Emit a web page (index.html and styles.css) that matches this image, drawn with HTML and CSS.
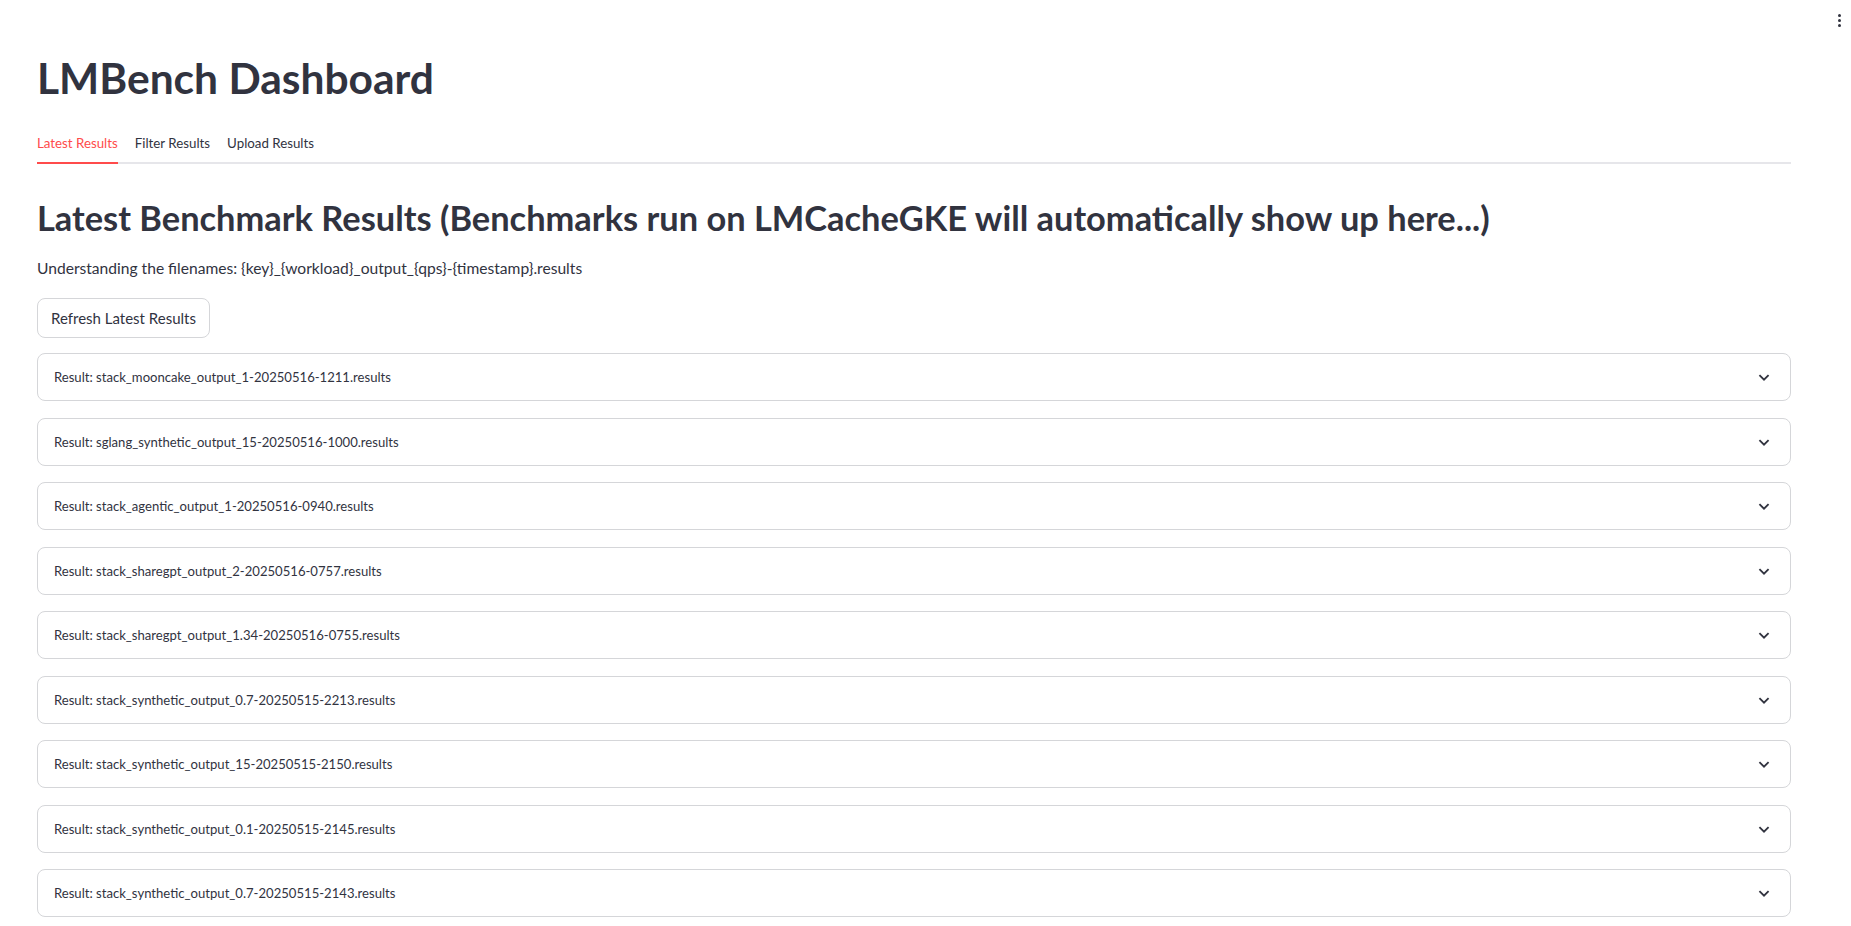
FILE: index.html
```html
<!DOCTYPE html>
<html lang="en">
<head>
<meta charset="utf-8">
<title>LMBench Dashboard</title>
<link rel="stylesheet" href="styles.css">
</head>
<body>
<div class="menu" aria-label="Main menu"><span></span><span></span><span></span></div>
<main class="page">
  <h1 class="title">LMBench Dashboard</h1>
  <nav class="tabs">
    <span class="tab active">Latest Results</span>
    <span class="tab">Filter Results</span>
    <span class="tab">Upload Results</span>
  </nav>
  <section class="panel">
    <h2 class="heading">Latest Benchmark Results (Benchmarks run on LMCacheGKE will automatically show up here...)</h2>
    <p class="note">Understanding the filenames: {key}_{workload}_output_{qps}-{timestamp}.results</p>
    <button class="btn">Refresh Latest Results</button>
    <div class="list">
      <div class="exp"><span>Result: stack_mooncake_output_1-20250516-1211.results</span><svg class="chev" viewBox="0 0 24 24"><path d="M7 10l5 5 5-5"/></svg></div>
      <div class="exp"><span>Result: sglang_synthetic_output_15-20250516-1000.results</span><svg class="chev" viewBox="0 0 24 24"><path d="M7 10l5 5 5-5"/></svg></div>
      <div class="exp"><span>Result: stack_agentic_output_1-20250516-0940.results</span><svg class="chev" viewBox="0 0 24 24"><path d="M7 10l5 5 5-5"/></svg></div>
      <div class="exp"><span>Result: stack_sharegpt_output_2-20250516-0757.results</span><svg class="chev" viewBox="0 0 24 24"><path d="M7 10l5 5 5-5"/></svg></div>
      <div class="exp"><span>Result: stack_sharegpt_output_1.34-20250516-0755.results</span><svg class="chev" viewBox="0 0 24 24"><path d="M7 10l5 5 5-5"/></svg></div>
      <div class="exp"><span>Result: stack_synthetic_output_0.7-20250515-2213.results</span><svg class="chev" viewBox="0 0 24 24"><path d="M7 10l5 5 5-5"/></svg></div>
      <div class="exp"><span>Result: stack_synthetic_output_15-20250515-2150.results</span><svg class="chev" viewBox="0 0 24 24"><path d="M7 10l5 5 5-5"/></svg></div>
      <div class="exp"><span>Result: stack_synthetic_output_0.1-20250515-2145.results</span><svg class="chev" viewBox="0 0 24 24"><path d="M7 10l5 5 5-5"/></svg></div>
      <div class="exp"><span>Result: stack_synthetic_output_0.7-20250515-2143.results</span><svg class="chev" viewBox="0 0 24 24"><path d="M7 10l5 5 5-5"/></svg></div>
    </div>
  </section>
</main>
</body>
</html>
```
FILE: styles.css
```css
* { box-sizing: border-box; }
html, body { margin: 0; padding: 0; background: #ffffff; }
body {
  font-family: Lato, "Noto Sans", sans-serif;
  color: #31333f;
  overflow: hidden;
  height: 926px;
}
.menu {
  position: absolute;
  top: 14px;
  right: 10px;
  display: flex;
  flex-direction: column;
  gap: 2px;
}
.menu span {
  width: 3px;
  height: 3px;
  background: #31333f;
  border-radius: 50%;
}
.page {
  padding: 48px 60px 0 37px;
}
.title {
  margin: 0;
  font-size: 42.5px;
  font-weight: 700;
  line-height: 60px;
}
.tabs {
  display: flex;
  gap: 17px;
  margin-top: 24px;
  border-bottom: 2px solid #e6e6ea;
}
.tab {
  font-size: 13.3px;
  line-height: 22px;
  padding-bottom: 8px;
  margin-bottom: -2px;
  border-bottom: 2px solid transparent;
}
.tab.active {
  color: #ff4b4b;
  border-bottom-color: #ff4b4b;
}
.panel {
  display: flex;
  flex-direction: column;
  align-items: flex-start;
}
.heading {
  margin: 29px 0 0;
  font-size: 34.4px;
  font-weight: 700;
  line-height: 50px;
}
.note {
  margin: 13px 0 0;
  font-size: 15.6px;
  line-height: 24px;
}
.btn {
  margin-top: 18px;
  height: 40px;
  padding: 0 13px;
  font-family: inherit;
  font-size: 15px;
  color: #31333f;
  background: #ffffff;
  border: 1px solid #d5d6d9;
  border-radius: 8px;
}
.list {
  align-self: stretch;
  margin-top: 15px;
  display: flex;
  flex-direction: column;
  gap: 16.5px;
}
.exp {
  height: 48px;
  display: flex;
  align-items: center;
  justify-content: space-between;
  padding: 0 15px 0 16px;
  border: 1px solid #d5d6d9;
  border-radius: 8px;
  font-size: 13.1px;
}
.chev {
  width: 22px;
  height: 22px;
  fill: none;
  stroke: #31333f;
  stroke-width: 2;
}
```
